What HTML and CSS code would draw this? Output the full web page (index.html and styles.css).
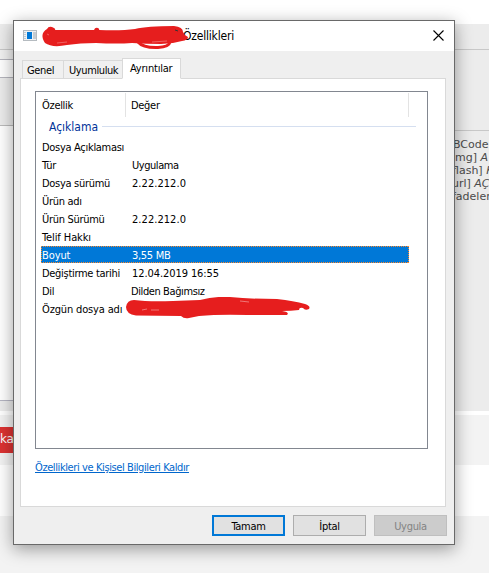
FILE: index.html
```html
<!DOCTYPE html>
<html lang="tr">
<head>
<meta charset="utf-8">
<title>Özellikleri</title>
<link rel="stylesheet" href="styles.css">
</head>
<body>
<div class="backdrop">
  <div class="strip top"></div>
  <div class="strip bar"></div>
  <div class="content">
    <div class="left"><div class="gap"></div><div class="field"></div><div class="tools"></div><div class="editor"></div></div>
    <div class="right"><div class="help"><div>BCode</div><div>mg] <i>A</i></div><div>flash] <i>K</i></div><div>url] <i>AÇ</i></div><div>fadeler</div></div></div>
  </div>
  <div class="strip line"></div>
  <div class="strip actions"><div class="save">ka</div></div>
  <div class="strip blank"></div>
</div>
<main class="window">
  <header class="titlebar">
    <svg class="appicon" width="14" height="11" viewBox="0 0 14 11"><path fill="#b5bbc0" d="M0 0h14v11H0z"/><path fill="#eef2f4" d="M1 1h12v9H1z"/><path fill="#c5cbd0" d="M10 2h3v7h-3zM1 2h2v1H1zM1 4h2v1H1zM1 6h2v1H1zM1 8h2v1H1z"/><path fill="#0078d7" d="M4 2h5v7H4z"/></svg>
    <span class="title">Özellikleri</span>
    <svg class="close" width="11" height="11" viewBox="0 0 11 11"><path d="M.5.5l10 10M10.500.5l-10 10" stroke="#000" stroke-width="1.1"/></svg>
    <svg class="scribble" width="150" height="30" viewBox="0 0 150 30"><path fill="#e61e1e" d="M5 3Q7-1 12 2Q14 3 13 4L52 4Q53 1 56 2Q58 3 57 4Q79 5 93 3Q105 0 132 0Q141 1 141 6Q142 9 146 11Q146 14 140 15Q130 18 119 18Q104 18 90 17Q75 18 54 17Q38 17 25 19Q10 22 3 17Q-3 8 5 3Z"/><path d="M96 16Q101 22 116 21.500Q127 21 128 16" fill="none" stroke="#e61e1e" stroke-width="3" stroke-linecap="round"/><path d="M15 17l10-1M110 16l15-1M5 8l2 1" stroke="#f5a5a5" stroke-width=".5"/><path d="M133 4l3 1" stroke="#333"/></svg>
  </header>
  <nav class="tabs"><div class="tab genel">Genel</div><div class="tab uyum">Uyumluluk</div><div class="tab active">Ayrıntılar</div></nav>
  <section class="panel">
    <div class="list">
      <div class="head"><span class="hname">Özellik</span><span class="hvalue">Değer</span></div>
      <div class="group"><span>Açıklama</span><i></i></div>
      <div class="row"><span class="name">Dosya Açıklaması</span></div>
      <div class="row"><span class="name">Tür</span><span class="value tight">Uygulama</span></div>
      <div class="row"><span class="name">Dosya sürümü</span><span class="value num">2.22.212.0</span></div>
      <div class="row"><span class="name">Ürün adı</span></div>
      <div class="row"><span class="name">Ürün Sürümü</span><span class="value num">2.22.212.0</span></div>
      <div class="row"><span class="name loose">Telif Hakkı</span></div>
      <div class="row selected"><span class="name loose">Boyut</span><span class="value">3,55 MB</span><svg class="focus" width="368" height="17" shape-rendering="crispEdges"><path d="M0 .5H368M0 16.500H368M.5 0V17M367.500 0V17" fill="none" stroke="#ff8728" stroke-dasharray="1 1"/></svg></div>
      <div class="row"><span class="name">Değiştirme tarihi</span><span class="value date">12.04.2019 16:55</span></div>
      <div class="row"><span class="name">Dil</span><span class="value dil">Dilden Bağımsız</span></div>
      <div class="row last"><span class="name orig">Özgün dosya adı</span>
        <svg class="mark" width="184" height="22" viewBox="0 0 184 22"><path fill="#e61e1e" d="M8 3Q23 5 47 4L74 3Q90-1 104 0Q125 2 151 2Q168 4 179 7Q185 9 183 12Q179 14 177 11Q173 10 173 13Q165 14 156 14Q164 15 161 18L122 18Q94 17 73 19L63 21Q58 22 55 19L10 18.500Q0 17 0 10Q1 3 8 3Z"/><path d="M16 13l5-1M25 13h8M114 4l9 1" stroke="#f49c9c" stroke-width=".7"/></svg>
      </div>
    </div>
    <a class="remove">Özellikleri ve Kişisel Bilgileri Kaldır</a>
  </section>
  <footer class="buttons"><div class="button primary">Tamam</div><div class="button">İptal</div><div class="button disabled">Uygula</div></footer>
</main>
</body>
</html>
```
FILE: styles.css
```css
* { box-sizing: border-box; }
body { margin: 0; width: 489px; height: 573px; overflow: hidden; position: relative; background: #f3f3f3; font: 11px/18px "DejaVu Sans Condensed", "DejaVu Sans", sans-serif; font-stretch: condensed; color: #000; letter-spacing: -.3px; white-space: nowrap; }
.top { height: 24px; background: #fff; }
.bar { height: 26px; background: #ececec; border-bottom: 1px solid #c8c8c8; }
.content { height: 361px; display: flex; justify-content: space-between; background: #ececec; }
.left { width: 20px; }
.gap { height: 9px; background: #f1f1f1; }
.field { height: 19px; background: #fff; border: solid #b5b5bd; border-width: 1px 0; }
.tools { height: 48px; border-bottom: 1px solid #bbb; }
.editor { height: 275px; background: #fff; border-bottom: 1px solid #b5b5c2; }
.right { width: 42px; padding-top: 80px; }
.help { border-top: 1px solid #c8c8c8; padding: 7px 0 0 6px; font: 11px/13px "DejaVu Sans", sans-serif; font-stretch: normal; letter-spacing: 0; color: #4b4b4b; width: 42px; overflow: hidden; }
.help div:nth-child(3), .help div:nth-child(4), .help div:nth-child(5) { margin-left: -1px; }
.help div:nth-child(3) { margin-left: -1px; }
.help div:nth-child(2) { padding-left: 2px; }
.line { height: 4px; background: #fff; }
.actions { height: 50px; padding-top: 12px; }
.save { width: 20px; height: 26px; background: #dc3232; color: #fff; font: 12px/24px "DejaVu Sans", sans-serif; letter-spacing: -.3px; }
.blank { height: 51px; background: #fff; }
.window { position: absolute; left: 13px; top: 20px; width: 442px; height: 525px; border: 1px solid #696969; background: #efefef; box-shadow: 0 4px 16px rgba(0,0,0,.38); display: flex; flex-direction: column; }
.titlebar { height: 30px; background: #fff; display: flex; align-items: center; padding: 0 10px 2px 9px; position: relative; flex: none; }
.title { margin: 2px 0 0 146px; font-size: 12px; letter-spacing: -.2px; }
.close { margin-left: auto; margin-top: 1px; }
.scribble { position: absolute; left: 28px; top: 5px; overflow: visible; }
.tabs { display: flex; align-items: flex-end; height: 28px; padding-left: 8px; position: relative; z-index: 1; flex: none; margin-bottom: -1px; }
.tab { height: 19px; border: 1px solid #d9d9d9; background: #f0f0f0; padding-left: 4px; line-height: 19px; }
.genel { width: 42px; letter-spacing: -.35px; }
.uyum { width: 60px; margin-left: -1px; padding-left: 5px; letter-spacing: -.4px; }
.active { width: 59px; height: 21px; margin-left: -1px; background: #fff; border-bottom-color: #fff; padding-left: 7px; line-height: 19px; letter-spacing: -.2px; }
.panel { margin-left: 6px; width: 426px; height: 429px; background: #fff; border: 1px solid #d9d9d9; padding: 12px 14px; flex: none; }
.list { width: 393px; height: 358px; border: 1px solid #828790; padding: 1px 5px; }
.head { height: 24px; display: flex; line-height: 26px; width: 368px; border-right: 1px solid #e3e3e3; }
.hname { width: 85px; border-right: 1px solid #e3e3e3; padding-left: 1px; }
.hvalue { padding-left: 5px; }
.group { height: 21px; padding: 0 0 1px 8px; width: 375px; display: flex; align-items: center; color: #003399; font-size: 12px; letter-spacing: 0; }
.group i { height: 1px; background: #d5dff0; flex: 1; margin: -1px 0 0 4px; }
.row { height: 18px; display: flex; width: 368px; padding-left: 1px; position: relative; line-height: 20px; }
.name { width: 90px; flex: none; }
.tight { letter-spacing: -.45px; }
.num { letter-spacing: .05px; }
.date { letter-spacing: -.08px; }
.dil { margin-left: -1px; letter-spacing: -.4px; }
.loose { letter-spacing: -.1px; }
.orig { letter-spacing: -.15px; }
.selected { height: 17px; margin: 0 0 1px; background: #0078d7; color: #fff; line-height: 19px; }
.focus, .mark { position: absolute; left: 0; top: 0; }
.mark { left: 85px; top: -3px; }
.remove { display: block; margin-top: 10px; color: #0066cc; text-decoration: underline; width: max-content; letter-spacing: -.4px; }
.buttons { display: flex; gap: 8px; padding: 8px 7px 0 198px; }
.button { width: 73px; height: 21px; border: 1px solid #adadad; background: #e1e1e1; text-align: center; line-height: 21px; }
.primary { border: 2px solid #0078d7; line-height: 19px; }
.disabled { background: #ccc; border-color: #bfbfbf; color: #838383; }
```
